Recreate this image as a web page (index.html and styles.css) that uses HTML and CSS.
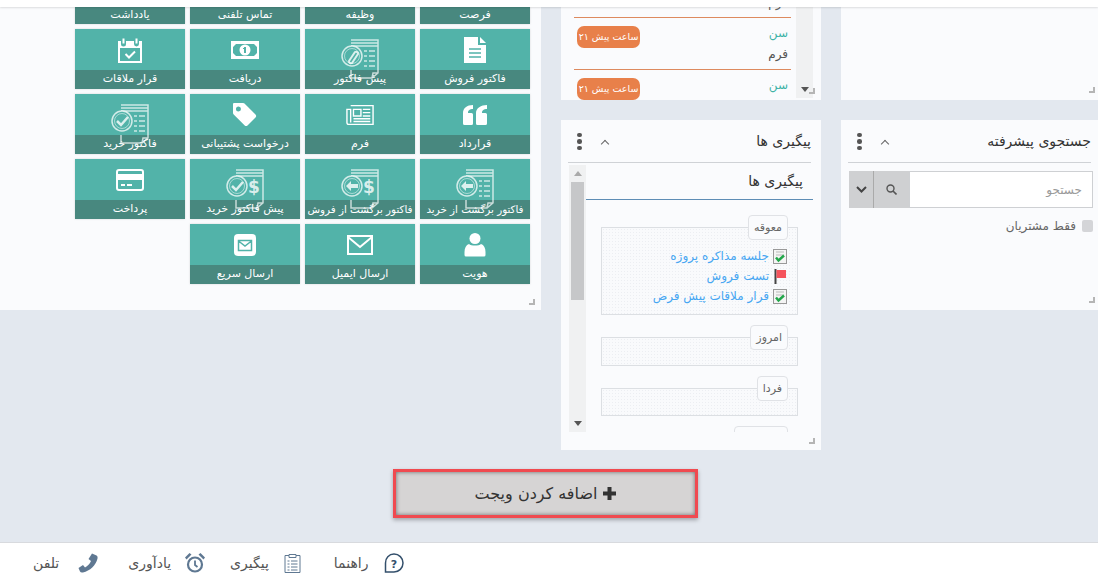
FILE: index.html
```html
<!DOCTYPE html>
<html lang="fa" dir="rtl">
<head>
<meta charset="UTF-8">
<title>داشبورد</title>
<link rel="stylesheet" href="styles.css">
</head>
<body>

<!-- icons used by the tiles -->
<svg class="defs" xmlns="http://www.w3.org/2000/svg">
  <symbol id="i-calendar" viewBox="0 0 28 26">
    <path fill="#fff" d="M2 4h3v3a2.5 2.5 0 0 0 5 0V4h8v3a2.500 2.500 0 0 0 5 0V4h3v22H2zM4 11v13h20V11z"/>
    <path fill="none" stroke="#fff" stroke-width="2" d="M7.500 1.500v5M20.500 1.500v5"/>
    <path fill="none" stroke="#fff" stroke-width="2" d="M9.500 17l3.500 3.500 6-6"/>
  </symbol>
  <symbol id="i-money" viewBox="0 0 28 26">
    <path fill="#fff" fill-rule="evenodd" d="M0 4h28v18H0zM2 10v6l3 3h18l3-3v-6l-3-3H5zM14 7.500a5.500 5.500 0 1 1 0 11 5.500 5.500 0 0 1 0-11z"/>
    <path fill="#52b3a9" d="M13 10h2v6h-2zM12 11h1v1h-1z"/>
  </symbol>
  <symbol id="i-file" viewBox="0 0 28 26">
    <path fill="#fff" d="M3 0h14v8h8v18H3z"/>
    <path fill="#fff" d="M19 0l6 6h-6z"/>
    <path stroke="#52b3a9" stroke-width="1.500" d="M8 12h12M8 16h12M8 20h12"/>
  </symbol>
  <symbol id="i-quote" viewBox="0 0 28 26">
    <path fill="#fff" d="M12 3v4c-3 0-5 1-5 4h3.500a1.500 1.500 0 0 1 1.500 1.500v9a1.500 1.500 0 0 1-1.500 1.500h-7A1.500 1.500 0 0 1 2 21.500V11c0-5 4-8 10-8zM26 3v4c-3 0-5 1-5 4h3.500a1.500 1.500 0 0 1 1.500 1.500v9a1.500 1.500 0 0 1-1.500 1.500h-8a1.500 1.500 0 0 1-1.500-1.500V11c0-5 5-8 11-8z"/>
  </symbol>
  <symbol id="i-news" viewBox="0 0 30 26">
    <path fill="none" stroke="#fff" stroke-width="1.500" d="M5 3h24v20H3a2 2 0 0 1-2-2V7h4v14"/>
    <path fill="none" stroke="#fff" stroke-width="1.500" d="M8 7h8v7H8z"/>
    <path stroke="#fff" stroke-width="1.500" d="M18 7h8M18 10.500h8M18 14h8M8 17h18M8 20h18"/>
  </symbol>
  <symbol id="i-tag" viewBox="0 0 28 26">
    <path fill="#fff" fill-rule="evenodd" d="M3 1h9a2 2 0 0 1 1.500.6l11 11a2 2 0 0 1 0 2.800l-8 8a2 2 0 0 1-2.800 0l-11-11A2 2 0 0 1 2 11V2a1 1 0 0 1 1-1zM7.500 4.500a2.500 2.500 0 1 0 0 5 2.500 2.500 0 0 0 0-5z"/>
  </symbol>
  <symbol id="i-card" viewBox="0 0 28 26">
    <rect x="1" y="3" width="26" height="20" rx="2" fill="none" stroke="#fff" stroke-width="2"/>
    <path fill="#fff" d="M1 7h26v6H1zM5 17h4v2H5zM11 17h5v2h-5z"/>
  </symbol>
  <symbol id="i-mail" viewBox="0 0 28 26">
    <rect x="3" y="2" width="22" height="22" rx="4" fill="#fff"/>
    <path fill="none" stroke="#52b3a9" stroke-width="1.500" d="M7.500 8.500h13v10h-13zM7.500 9l6.500 5 6.500-5"/>
  </symbol>
  <symbol id="i-mail-line" viewBox="0 0 28 26">
    <path fill="none" stroke="#fff" stroke-width="2" d="M2 4h24v18H2zM2 5l12 10 12-10"/>
  </symbol>
  <symbol id="i-user" viewBox="0 0 28 26">
    <circle cx="14" cy="6.500" r="5.500" fill="#fff"/>
    <path fill="#fff" d="M8 12c2 2 10 2 12 0 3 1 4.500 4 4.500 8v3a1.500 1.500 0 0 1-1.500 1.500H5A1.500 1.500 0 0 1 3.500 23v-3c0-4 1.500-7 4.500-8z"/>
  </symbol>
  <symbol id="i-doc" viewBox="0 0 48 48">
    <path fill="none" stroke="#fff" stroke-width="1.500" stroke-opacity=".7" d="M15 5h27v33l-6 5H15v-8M15 8h27M15 11h27M36 43l1-5h5"/>
  </symbol>
  <symbol id="i-lines" viewBox="0 0 48 48">
    <path stroke="#fff" stroke-width="1.500" stroke-opacity=".7" d="M28 16h3M33 16h6M28 21h3M33 21h6M28 26h3M33 26h6M28 31h3M33 31h6"/>
  </symbol>
  <symbol id="i-ring" viewBox="0 0 48 48">
    <circle cx="16" cy="21" r="10" fill="#52b3a9" stroke="#fff" stroke-width="1.500" stroke-opacity=".75"/>
    <circle cx="16" cy="21" r="7.500" fill="none" stroke="#fff" stroke-width="1" stroke-opacity=".5"/>
  </symbol>
  <symbol id="i-check" viewBox="0 0 48 48">
    <path fill="none" stroke="#fff" stroke-width="2.500" stroke-opacity=".8" d="M11 21l4 4 7-8"/>
  </symbol>
  <symbol id="i-back" viewBox="0 0 48 48">
    <path fill="#fff" fill-opacity=".8" d="M10 21l5-5v3h7v4h-7v3z"/>
  </symbol>
  <symbol id="i-clip" viewBox="0 0 48 48">
    <path fill="none" stroke="#fff" stroke-width="2" stroke-opacity=".8" d="M13 26l6-9a2 2 0 0 1 3 2l-6 9a2 2 0 0 1-3-2z"/>
  </symbol>
  <symbol id="i-task" viewBox="0 0 14 15">
    <rect x=".5" y=".5" width="13" height="14" fill="#f4f4f4" stroke="#999"/>
    <path stroke="#bbb" d="M3 3h8M3 6h8"/>
    <path fill="none" stroke="#22a64a" stroke-width="2.500" d="M3 8.500l2.500 3L11 6.500"/>
  </symbol>
</svg>

<div class="top-bar"></div>

<main class="page">
  <div class="board">

    <!-- ستون جستجو -->
    <section class="col col-search">
      <div class="widget widget-short"><span class="grip"></span></div>
      <div class="widget widget-search">
        <header class="widget-head">
          <h3>جستجوی پیشرفته</h3>
          <span class="chev"></span>
          <span class="kebab"><i></i><i></i><i></i></span>
        </header>
        <div class="search-box">
          <input class="search-input" type="text" placeholder="جستجو">
          <button class="search-btn" type="button">
            <svg width="11" height="11" viewBox="0 0 11 11"><circle cx="4.500" cy="4.500" r="3.500" fill="none" stroke="#555" stroke-width="1.400"/><path stroke="#555" stroke-width="1.600" d="M7 7l3.500 3.500"/></svg>
          </button>
          <button class="search-btn search-more" type="button">
            <svg width="11" height="7" viewBox="0 0 11 7"><path fill="none" stroke="#444" stroke-width="2" d="M1 1l4.500 4.500L10 1"/></svg>
          </button>
        </div>
        <label class="only-customers"><span class="check-box"></span>فقط مشتریان</label>
        <span class="grip"></span>
      </div>
    </section>

    <!-- ستون پیگیری ها -->
    <section class="col col-follow">
      <div class="widget widget-short widget-list">
        <div class="feed">
          <div class="feed-cut">فرم</div>
          <div class="feed-row">
            <div class="feed-top"><span class="feed-age">سن</span><span class="badge">ساعت پیش ۲۱</span></div>
            <div class="feed-type">فرم</div>
          </div>
          <div class="feed-row">
            <div class="feed-top"><span class="feed-age">سن</span><span class="badge">ساعت پیش ۲۱</span></div>
          </div>
        </div>
        <div class="scrollbar scrollbar-low"><span class="arrow-down"></span></div>
        <span class="grip"></span>
      </div>

      <div class="widget widget-follow">
        <header class="widget-head">
          <h3>پیگیری ها</h3>
          <span class="chev"></span>
          <span class="kebab"><i></i><i></i><i></i></span>
        </header>
        <div class="follow-body">
          <div class="follow-content">
            <h4 class="follow-title">پیگیری ها</h4>

            <div class="group">
              <span class="group-label">معوقه</span>
              <div class="group-box group-box-full">
                <a class="task"><svg class="task-ico"><use href="#i-task"/></svg>جلسه مذاکره پروژه</a>
                <a class="task">
                  <svg class="task-ico" viewBox="0 0 14 15"><path fill="#444" d="M1.500 0h2v15h-2z"/><path fill="#f5535c" d="M3.500 1H13v8H3.500z"/></svg>تست فروش</a>
                <a class="task"><svg class="task-ico"><use href="#i-task"/></svg>قرار ملاقات پیش فرض</a>
              </div>
            </div>

            <div class="group">
              <span class="group-label">امروز</span>
              <div class="group-box group-box-a"></div>
            </div>

            <div class="group">
              <span class="group-label">فردا</span>
              <div class="group-box group-box-b"></div>
            </div>

            <div class="group">
              <span class="group-label group-label-empty"></span>
            </div>
          </div>
          <div class="scrollbar">
            <span class="arrow-up"></span>
            <span class="thumb"></span>
            <span class="arrow-down"></span>
          </div>
        </div>
        <span class="grip"></span>
      </div>
    </section>

    <!-- ستون کاشی ها -->
    <section class="col col-tiles">
      <div class="widget widget-tiles">
        <div class="tile-grid">
          <div class="tile tile-cut"><span class="tile-label">فرصت</span></div>
          <div class="tile tile-cut"><span class="tile-label">وظیفه</span></div>
          <div class="tile tile-cut"><span class="tile-label">تماس تلفنی</span></div>
          <div class="tile tile-cut"><span class="tile-label">یادداشت</span></div>

          <div class="tile">
            <div class="tile-icon"><svg class="ico"><use href="#i-file"/></svg></div>
            <span class="tile-label">فاکتور فروش</span>
          </div>
          <div class="tile">
            <div class="tile-icon">
              <svg class="ico-doc" viewBox="0 0 48 48"><use href="#i-doc"/><use href="#i-lines"/><use href="#i-ring"/><use href="#i-clip"/></svg>
            </div>
            <span class="tile-label">پیش فاکتور</span>
          </div>
          <div class="tile">
            <div class="tile-icon"><svg class="ico"><use href="#i-money"/></svg></div>
            <span class="tile-label">دریافت</span>
          </div>
          <div class="tile">
            <div class="tile-icon"><svg class="ico"><use href="#i-calendar"/></svg></div>
            <span class="tile-label">قرار ملاقات</span>
          </div>

          <div class="tile">
            <div class="tile-icon"><svg class="ico"><use href="#i-quote"/></svg></div>
            <span class="tile-label">قرارداد</span>
          </div>
          <div class="tile">
            <div class="tile-icon"><svg class="ico"><use href="#i-news"/></svg></div>
            <span class="tile-label">فرم</span>
          </div>
          <div class="tile">
            <div class="tile-icon"><svg class="ico"><use href="#i-tag"/></svg></div>
            <span class="tile-label">درخواست پشتیبانی</span>
          </div>
          <div class="tile">
            <div class="tile-icon">
              <svg class="ico-doc" viewBox="0 0 48 48"><use href="#i-doc"/><use href="#i-lines"/><use href="#i-ring"/><use href="#i-check"/></svg>
            </div>
            <span class="tile-label">فاکتور خرید</span>
          </div>

          <div class="tile">
            <div class="tile-icon">
              <svg class="ico-doc" viewBox="0 0 48 48"><use href="#i-doc"/><use href="#i-lines"/><use href="#i-ring"/><use href="#i-back"/></svg>
            </div>
            <span class="tile-label tile-label-long">فاکتور برگشت از خرید</span>
          </div>
          <div class="tile">
            <div class="tile-icon">
              <svg class="ico-doc" viewBox="0 0 48 48"><use href="#i-doc"/><text class="dollar" x="33" y="28">$</text><use href="#i-ring"/><use href="#i-back"/></svg>
            </div>
            <span class="tile-label tile-label-long">فاکتور برگشت از فروش</span>
          </div>
          <div class="tile">
            <div class="tile-icon">
              <svg class="ico-doc" viewBox="0 0 48 48"><use href="#i-doc"/><text class="dollar" x="33" y="28">$</text><use href="#i-ring"/><use href="#i-check"/></svg>
            </div>
            <span class="tile-label">پیش فاکتور خرید</span>
          </div>
          <div class="tile">
            <div class="tile-icon"><svg class="ico"><use href="#i-card"/></svg></div>
            <span class="tile-label">پرداخت</span>
          </div>

          <div class="tile">
            <div class="tile-icon"><svg class="ico"><use href="#i-user"/></svg></div>
            <span class="tile-label">هویت</span>
          </div>
          <div class="tile">
            <div class="tile-icon"><svg class="ico"><use href="#i-mail-line"/></svg></div>
            <span class="tile-label">ارسال ایمیل</span>
          </div>
          <div class="tile">
            <div class="tile-icon"><svg class="ico"><use href="#i-mail"/></svg></div>
            <span class="tile-label">ارسال سریع</span>
          </div>
        </div>
        <span class="grip"></span>
      </div>
    </section>
  </div>

  <div class="add-row">
    <button class="add-widget" type="button">
      <svg width="13" height="13" viewBox="0 0 13 13"><path fill="#333" d="M4.500 0h4v4.500H13v4H8.500V13h-4V8.500H0v-4h4.500z"/></svg>
      اضافه کردن ویجت
    </button>
  </div>
</main>

<footer class="bottom-bar">
  <a class="bottom-item bottom-help">
    <svg width="20" height="20" viewBox="0 0 20 20"><path fill="none" stroke="#34506c" stroke-width="1.500" d="M10 1a9 9 0 0 1 0 18H1.500v-9A8.500 8.500 0 0 1 10 1z"/><text class="help-mark" x="10" y="14.500">?</text></svg>
    راهنما
  </a>
  <a class="bottom-item bottom-follow">
    <svg width="17" height="20" viewBox="0 0 17 20"><path fill="none" stroke="#5f7892" d="M5 2.500H1v17h15v-17h-4M5 1.500h7v3H5zM3.500 8h2M7 8h6.500M3.500 11h2M7 11h6.500M3.500 14h2M7 14h6.500M3.500 17h2M7 17h6.500"/></svg>
    پیگیری
  </a>
  <a class="bottom-item bottom-alarm">
    <svg width="20" height="20" viewBox="0 0 20 20"><circle cx="10" cy="11.500" r="7" fill="none" stroke="#5f7892" stroke-width="2.200"/><path fill="none" stroke="#5f7892" stroke-width="1.800" d="M10 7.500v4.500l2.500 2"/><path fill="#5f7892" d="M0 4.500L4.500 0l2 1.500L1.500 6.500zM20 4.500L15.500 0l-2 1.500 5 5z"/></svg>
    یادآوری
  </a>
  <a class="bottom-item bottom-phone">
    <svg width="20" height="20" viewBox="0 0 20 20"><path fill="#5f7892" d="M14 .5l4.500 2c1 .5 1.300 1.500 1 3C18 12 12 18 5 19.500c-1.500.3-2.500 0-3-1L.5 15l4.500-3 2 2.500c2.500-1.300 5-4 6-6.500l-2.500-2z"/></svg>
    تلفن
  </a>
</footer>

</body>
</html>
```

FILE: styles.css
```css
/* base */
* {
  box-sizing: border-box;
}

html, body {
  height: 100%;
}

body {
  margin: 0;
  height: 582px;
  overflow: hidden;
  display: flex;
  flex-direction: column;
  background-color: #e3e8ef;
  color: #444;
  font-family: "DejaVu Sans", sans-serif;
  font-size: 12px;
}

.defs {
  display: none;
}

.top-bar {
  height: 7px;
  flex: none;
  background-color: #fff;
  box-shadow: 0 1px 2px rgba(0,0,0,0.12);
  position: relative;
  z-index: 2;
}

.page {
  flex: 1;
  min-height: 0;
}

/* columns */
.board {
  display: flex;
  gap: 20px;
  height: 443px;
}

.col {
  display: flex;
  flex-direction: column;
  gap: 20px;
  flex: none;
}

.col-search {
  width: 257px;
}

.col-follow {
  width: 260px;
}

.col-tiles {
  width: 541px;
}

/* widgets */
.widget {
  position: relative;
  background-color: #fafbfd;
}

.widget-short {
  height: 93px;
}

.widget-search {
  height: 190px;
}

.widget-follow {
  height: 330px;
}

.widget-tiles {
  height: 303px;
}

.grip {
  position: absolute;
  right: 6px;
  bottom: 6px;
  width: 6px;
  height: 6px;
  border-right: 2px solid #b5b5b5;
  border-bottom: 2px solid #b5b5b5;
}

.col-search .grip {
  right: 3px;
  bottom: 7px;
}

.col-tiles .grip {
  bottom: 5px;
}

.widget-head {
  display: flex;
  align-items: center;
  height: 43px;
  margin: 0 10px 0 7px;
  border-bottom: 1px solid #cfd2d6;
}

.widget-search .widget-head {
  margin: 0 7px 0 7px;
}

.widget-head h3 {
  margin: 0;
  font-size: 14px;
  font-weight: normal;
  color: #333;
  flex: 1;
}

.chev {
  width: 6px;
  height: 6px;
  margin-left: 20px;
  margin-top: 6px;
  border-top: 1px solid #666;
  border-right: 1px solid #666;
  transform: rotate(-45deg);
}

.kebab {
  display: flex;
  flex-direction: column;
  gap: 2px;
  margin-left: 9px;
  margin-top: 1px;
}

.kebab i {
  width: 4.500px;
  height: 4.500px;
  border-radius: 50%;
  background-color: #555;
}

/* search widget */
.search-box {
  display: flex;
  height: 37px;
  margin: 8px 5px 0 8px;
}

.search-input {
  flex: 1;
  min-width: 0;
  border: 1px solid #ced0d3;
  padding: 0 10px;
  font-family: inherit;
  font-size: 12px;
  background-color: #fff;
}

.search-input::placeholder {
  color: #999;
}

.search-btn {
  width: 35px;
  border: none;
  padding: 0;
  background-color: #cfd0d2;
  display: flex;
  align-items: center;
  justify-content: center;
}

.search-more {
  width: 25px;
  border-right: 1px solid #aaa;
  background-clip: padding-box;
}

.only-customers {
  display: flex;
  align-items: center;
  gap: 6px;
  margin: 11px 5px 0 0;
  color: #666;
  font-size: 12px;
}

.check-box {
  width: 11px;
  height: 12px;
  border-radius: 2px;
  background-color: #d4d5d8;
}

/* list in the short widget */
.widget-list {
  display: flex;
  padding-right: 8px;
}

.feed {
  order: 2;
  width: 217px;
  margin-right: 5px;
  height: 93px;
  overflow: hidden;
}

.scrollbar {
  width: 17px;
  flex: none;
  background-color: #f0f1f2;
  display: flex;
  flex-direction: column;
  align-items: center;
}

.scrollbar-low {
  order: 1;
  height: 91px;
  justify-content: flex-end;
  padding-bottom: 6px;
}

.feed-cut {
  height: 14px;
  margin-top: -4px;
  overflow: hidden;
  line-height: 0;
  padding: 0 3px;
  color: #666;
}

.feed-row {
  height: 52px;
  padding: 8px 3px 0;
  border-top: 1px solid #dd8a5f;
}

.feed-top {
  display: flex;
  justify-content: space-between;
  align-items: flex-start;
}

.feed-age {
  color: #3fb3a7;
  font-size: 12px;
  line-height: 14px;
}

.badge {
  width: 63px;
  height: 22px;
  line-height: 22px;
  text-align: center;
  border-radius: 7px;
  background-color: #e8804a;
  color: #fff;
  font-size: 9.500px;
  white-space: nowrap;
}

.feed-type {
  font-size: 12px;
  color: #555;
  margin-top: -2px;
  line-height: 16px;
}

.arrow-up, .arrow-down {
  width: 0;
  height: 0;
  border-left: 4px solid transparent;
  border-right: 4px solid transparent;
}

.arrow-up {
  margin-top: 6px;
  border-bottom: 5px solid #aaa;
}

.arrow-down {
  border-top: 5px solid #555;
}

/* follow up widget */
.follow-body {
  display: flex;
  height: 267px;
  margin: 2px 8px 0;
}

.follow-content {
  flex: 1;
  min-width: 0;
  overflow: hidden;
}

.follow-body .scrollbar {
  padding-bottom: 6px;
}

.thumb {
  width: 13px;
  height: 118px;
  margin-top: 6px;
  margin-bottom: auto;
  background-color: #c6c7c9;
}

.follow-title {
  margin: 0 0 15px;
  height: 35px;
  padding: 8px 10px 0 0;
  font-size: 14px;
  font-weight: normal;
  color: #333;
  border-bottom: 1px solid #5d8db5;
}

.group {
  margin: 0 15px 10px;
}

.group-label {
  display: block;
  position: relative;
  width: fit-content;
  height: 25px;
  line-height: 23px;
  padding: 0 5px;
  margin: 0 10px -13px 0;
  background-color: #fafbfd;
  border: 1px solid #e0e2e6;
  border-radius: 4px;
  color: #666;
  font-size: 11px;
}

.group-label-empty {
  width: 54px;
}

.group-box {
  border: 1px solid #dcdfe3;
  background-color: #f9fafc;
  background-image: radial-gradient(#eceef2 0.7px, transparent 0.8px);
  background-size: 3px 3px;
}

.group-box-full {
  height: 88px;
  padding: 18px 10px 0 0;
}

.group-box-a {
  height: 29px;
}

.group-box-b {
  height: 28px;
}

.task {
  display: flex;
  align-items: center;
  gap: 4px;
  height: 20px;
  color: #46a6f2;
  font-size: 12px;
}

.task-ico {
  width: 14px;
  height: 15px;
  flex: none;
}

/* tiles */
.tile-grid {
  display: grid;
  grid-template-columns: repeat(4, 110px);
  grid-template-rows: 17px repeat(4, 60px);
  gap: 5px;
  padding-right: 11px;
}

.tile {
  display: flex;
  flex-direction: column;
  background-color: #52b3a9;
  box-shadow: 0 0 2px rgba(0,0,0,0.15);
}

.tile-cut {
  background-color: #48887f;
}

.tile-icon {
  height: 41px;
  flex: none;
  display: flex;
  justify-content: center;
  align-items: center;
}

.ico {
  width: 28px;
  height: 26px;
}

.ico-doc {
  width: 48px;
  height: 48px;
  align-self: flex-start;
  margin-top: 6px;
  position: relative;
  z-index: 1;
  overflow: visible;
}

.dollar {
  fill: #fff;
  fill-opacity: .8;
  font-family: "DejaVu Sans", sans-serif;
  font-size: 17px;
  font-weight: bold;
  text-anchor: middle;
}

.tile-label {
  display: block;
  height: 19px;
  line-height: 18px;
  flex: none;
  background-color: #48887f;
  color: #fff;
  text-align: center;
  font-size: 11px;
  white-space: nowrap;
}

.tile-label-long {
  font-size: 10.300px;
}

.tile-cut .tile-label {
  height: 17px;
  line-height: 15px;
}

/* add widget button */
.add-row {
  display: flex;
  justify-content: center;
  padding: 19px 7px 0 0;
}

.add-widget {
  display: flex;
  align-items: center;
  justify-content: center;
  gap: 6px;
  width: 305px;
  height: 49px;
  background-color: #d6d4d4;
  border: 3px solid #f04a50;
  box-shadow: inset 0 0 4px rgba(0,0,0,0.5), 0 2px 4px rgba(0,0,0,0.3);
  color: #333;
  font-family: inherit;
  font-size: 16px;
}

/* bottom bar */
.bottom-bar {
  flex: none;
  height: 40px;
  display: flex;
  align-items: center;
  background-color: #fff;
  border-top: 1px solid #d8dade;
  padding-left: 33px;
  justify-content: flex-end;
  color: #555;
  font-size: 14px;
}

.bottom-item {
  display: flex;
  align-items: center;
}

.bottom-help {
  gap: 16px;
  margin-left: 33px;
}

.bottom-follow {
  gap: 15px;
  margin-left: 25px;
}

.bottom-alarm {
  gap: 14px;
  margin-left: 30px;
}

.bottom-phone {
  gap: 19px;
}

.help-mark {
  fill: #34506c;
  font-family: "DejaVu Sans", sans-serif;
  font-size: 11px;
  font-weight: bold;
  text-anchor: middle;
}
```
